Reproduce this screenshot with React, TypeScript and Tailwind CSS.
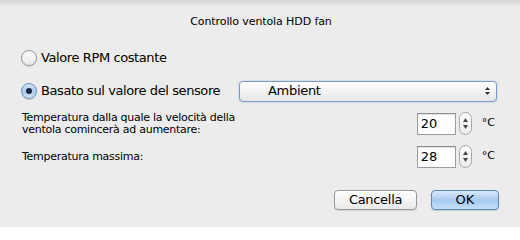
import React from "react";

const font = { fontFamily: '"DejaVu Sans", "Liberation Sans", sans-serif' };

function Radio({ checked }: { checked?: boolean }) {
  return checked ? (
    <div className="w-[16px] h-[16px] rounded-full border border-[#6b8fc4] bg-gradient-to-b from-[#d7e7f8] via-[#a9cbee] to-[#cfe4f8] flex items-center justify-center shadow-[0_1px_1px_rgba(0,0,0,0.15)]">
      <div className="w-[6px] h-[6px] rounded-full bg-[#1c2c44]" />
    </div>
  ) : (
    <div className="w-[16px] h-[16px] rounded-full border border-[#9a9a9a] bg-gradient-to-b from-[#fdfdfd] to-[#e8e8e8] shadow-[0_1px_1px_rgba(0,0,0,0.12)]" />
  );
}

function Stepper() {
  return (
    <div className="w-[13px] h-[23px] rounded-full border border-[#a8a8a8] bg-gradient-to-b from-[#ffffff] to-[#ececec] flex flex-col items-center justify-center gap-[3px]">
      <svg width="5" height="4" viewBox="0 0 5 4"><path d="M2.5 0 L5 4 L0 4 Z" fill="#444" /></svg>
      <svg width="5" height="4" viewBox="0 0 5 4"><path d="M0 0 L5 0 L2.5 4 Z" fill="#444" /></svg>
    </div>
  );
}

function NumField({ value }: { value: string }) {
  return (
    <div className="flex items-center">
      <div className="w-[39px] h-[22px] border border-[#9c9c9c] border-t-[#8a8a8a] bg-white flex items-center pl-[3px] text-[13px] tracking-[-0.2px] text-black shadow-[inset_0_1px_1px_rgba(0,0,0,0.12)]">
        {value}
      </div>
      <div className="ml-[3px]">
        <Stepper />
      </div>
      <div className="ml-[10px] text-[11px] text-black">°C</div>
    </div>
  );
}

export default function App() {
  return (
    <div style={font} className="w-[520px] h-[227px] bg-[#ececec] text-black flex flex-col overflow-hidden">
      <div className="h-[7px] bg-gradient-to-b from-[#d6d6d6] to-[#ececec]" />
      <div className="mt-[8px] h-[14px] text-center text-[11px] leading-[14px] pl-[2px] tracking-[-0.1px]">Controllo ventola HDD fan</div>

      <div className="mt-[21px] ml-[21px] flex items-center h-[16px]">
        <Radio />
        <span className="ml-[4px] text-[13px] leading-[16px] tracking-[-0.4px]">Valore RPM costante</span>
      </div>

      <div className="mt-[17px] ml-[21px] flex items-center h-[16px]">
        <Radio checked />
        <span className="ml-[4px] text-[13px] leading-[16px] tracking-[-0.4px]">Basato sul valore del sensore</span>
        <div className="ml-auto mr-[23px] w-[258px] h-[21px] rounded-[4px] border border-[#7d9cc8] bg-gradient-to-b from-[#ffffff] via-[#f3f3f3] to-[#e6e6e6] shadow-[0_0_2px_rgba(80,130,200,0.5)] flex items-center pl-[28px] pr-[6px]">
          <span className="text-[13px] leading-[16px] flex-1 tracking-[-0.3px]">Ambient</span>
          <div className="flex flex-col items-center gap-[2px]">
            <svg width="5" height="3" viewBox="0 0 5 3"><path d="M2.5 0 L5 3 L0 3 Z" fill="#333" /></svg>
            <svg width="5" height="3" viewBox="0 0 5 3"><path d="M0 0 L5 0 L2.5 3 Z" fill="#333" /></svg>
          </div>
        </div>
      </div>

      <div className="mt-[13px] ml-[22px] mr-[25px] flex items-start h-[23px]">
        <div className="text-[11px] leading-[12px] w-[300px] tracking-[-0.27px]">
          Temperatura dalla quale la velocità della
          <br />
          ventola comincerà ad aumentare:
        </div>
        <div className="ml-auto">
          <NumField value="20" />
        </div>
      </div>

      <div className="mt-[10px] ml-[22px] mr-[25px] flex items-center h-[23px]">
        <div className="text-[11px] leading-[12px] tracking-[-0.27px]">Temperatura massima:</div>
        <div className="ml-auto">
          <NumField value="28" />
        </div>
      </div>

      <div className="mt-[22px] mr-[21px] flex justify-end gap-[14px]">
        <button className="w-[83px] h-[20px] rounded-[4px] border border-[#9a9a9a] bg-gradient-to-b from-[#ffffff] to-[#e9e9e9] text-[13px] leading-[18px] tracking-[-0.3px] shadow-[0_1px_1px_rgba(0,0,0,0.12)]">
          Cancella
        </button>
        <button className="w-[68px] h-[20px] rounded-[4px] border border-[#5b86c4] bg-gradient-to-b from-[#d9e9fa] via-[#a7cbf0] to-[#c3defa] text-[13px] leading-[18px] shadow-[0_1px_1px_rgba(0,0,0,0.15)]">
          OK
        </button>
      </div>
    </div>
  );
}
